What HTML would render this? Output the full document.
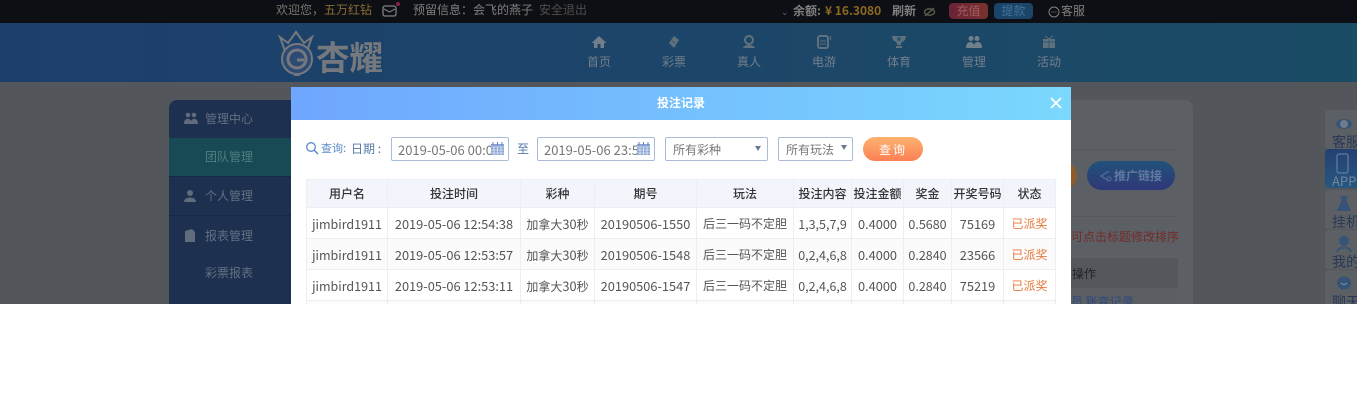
<!DOCTYPE html>
<html><head><meta charset="utf-8"><style>
html,body{margin:0;padding:0;background:#fff}
#p{position:relative;width:1357px;height:407px;overflow:hidden;background:#fff;font-family:"Noto Sans CJK SC","Liberation Sans",sans-serif;font-size:12px}
#v{position:absolute;left:0;top:0;width:1357px;height:304px;overflow:hidden;background:#53575c}
.a{position:absolute;white-space:nowrap;line-height:1}
.nav{position:absolute;top:35px;width:60px;text-align:center;color:#727e8a;font-size:12px}
.nav svg{display:block;margin:0 auto 6px}
.nav span{display:block;line-height:14px}
.side{position:absolute;color:#636f81;font-size:12px}
.rt{position:absolute;left:1325px;width:40px;height:39px;background:#5c6065;border-radius:4px 0 0 4px;overflow:hidden;color:#2a3855;font-size:14px}
.rt span{position:absolute;left:7px;top:25px;line-height:14px;white-space:nowrap}
table{position:absolute;left:306px;top:179px;border-collapse:collapse;table-layout:fixed;width:750px;font-size:12px;color:#555}
td,th{border:1px solid #eceef2;text-align:center;padding:0;white-space:nowrap;overflow:hidden}
th{height:27px;background:#f2f5fc;color:#333;font-weight:500}
td{height:30px;background:#fff}
tr.z td{background:#fbfbfb}
td b{font-weight:400;font-size:12.8px}
td b.u{font-size:12.500px}
.s{color:#e8793a}
.inp{position:absolute;top:137px;height:24px;box-sizing:border-box;border:1px solid #a9bcd6;border-radius:2px;background:#fff;color:#777;font-size:13px;line-height:23px;overflow:hidden;white-space:nowrap}
</style></head><body><div id="p"><div id="v">

<div class="a" style="left:0;top:0;width:1357px;height:23px;background:#0e0f14"></div>
<div class="a" style="left:0;top:23px;width:1357px;height:59px;background:linear-gradient(90deg,#1d3f6c,#1b4c66)"></div>

<div class="a" style="left:276px;top:4px;color:#767670">欢迎您，<span style="color:#8b6d35">五万红钻</span></div>
<svg class="a" style="left:382px;top:1px" width="20" height="18"><rect x="1" y="5" width="13" height="10" rx="2" fill="none" stroke="#808080" stroke-width="1.300"/><path d="M2 8l5.500 3L13 8" fill="none" stroke="#808080"/><circle cx="16" cy="3" r="2" fill="#8a2040"/></svg>
<div class="a" style="left:413px;top:4px;color:#7f7f7f">预留信息：会飞的燕子</div>
<div class="a" style="left:539px;top:4px;color:#4e4e4e">安全退出</div>

<div class="a" style="left:781px;top:7px;color:#666;font-size:9px">⌄</div>
<div class="a" style="left:793px;top:5px;color:#7f7f7f;font-weight:bold">余额:</div>
<div class="a" style="left:825px;top:5px;color:#8d6a22;font-weight:bold">¥ 16.3080</div>
<div class="a" style="left:892px;top:5px;color:#7f7f7f;font-weight:bold">刷新</div>
<svg class="a" style="left:923px;top:6px" width="13" height="12"><ellipse cx="6.500" cy="6" rx="5" ry="3.200" fill="none" stroke="#59634f" stroke-width="1.300"/><path d="M2 10l9-8" stroke="#59634f" stroke-width="1.300"/></svg>
<div class="a" style="left:949px;top:3px;width:39px;height:16px;border-radius:4px;background:linear-gradient(90deg,#6a2336,#78322d);color:#a05a62;text-align:center;line-height:16px">充值</div>
<div class="a" style="left:994px;top:3px;width:39px;height:16px;border-radius:4px;background:#1a4468;color:#44729a;text-align:center;line-height:16px">提款</div>
<svg class="a" style="left:1048px;top:6px" width="12" height="12"><circle cx="6" cy="6" r="5" fill="none" stroke="#808080"/><path d="M3.500 6h1M5.500 6h1M7.500 6h1" stroke="#808080"/></svg>
<div class="a" style="left:1061px;top:5px;color:#808080">客服</div>

<svg class="a" style="left:277px;top:28px" width="42" height="50">
<path d="M3 9l8 6 8-11 8 11 8-6-5 14H8z" fill="none" stroke="#75797e" stroke-width="2"/>
<circle cx="20" cy="31" r="15" fill="#2c4a74" stroke="#75797e" stroke-width="2"/>
<circle cx="20" cy="31" r="9" fill="none" stroke="#75797e" stroke-width="3"/>
<path d="M20 32h7" stroke="#75797e" stroke-width="3"/>
<path d="M20 46l-4 2h8z" fill="#75797e"/>
</svg>
<div class="a" style="left:316px;top:39px;color:#75797e;font-size:33.500px;font-weight:bold;letter-spacing:0;line-height:34px">杏耀</div>

<div class="nav" style="left:569px"><svg width="16" height="14"><path d="M8 1L0.500 8H3v5h3.500V9h3v4H13V8h2.500z" fill="#727e8a"/></svg><span>首页</span></div>
<div class="nav" style="left:644px"><svg width="16" height="14"><path d="M8 1l5 4-5 8-5-5z" fill="#62707b"/><path d="M6 6l3 2" stroke="#285a7a"/></svg><span>彩票</span></div>
<div class="nav" style="left:719px"><svg width="16" height="14"><circle cx="8" cy="5" r="4" fill="none" stroke="#62707b" stroke-width="2"/><path d="M2 13c1-4 11-4 12 0z" fill="#62707b"/></svg><span>真人</span></div>
<div class="nav" style="left:794px"><svg width="16" height="14"><rect x="2" y="1" width="10" height="12" rx="2" fill="none" stroke="#62707b" stroke-width="2"/><path d="M4 6h6M4 9h6" stroke="#62707b"/><path d="M14.500 1v4" stroke="#62707b"/></svg><span>电游</span></div>
<div class="nav" style="left:869px"><svg width="16" height="14"><path d="M1 1h14l-1 4-4 3v2H6V8L2 5z" fill="#62707b"/><circle cx="8" cy="4" r="2" fill="#285a7a"/><path d="M5 12h6" stroke="#62707b" stroke-width="2"/></svg><span>体育</span></div>
<div class="nav" style="left:944px"><svg width="16" height="14"><circle cx="5" cy="3.500" r="2.500" fill="#727e8a"/><circle cx="11" cy="3.500" r="2.500" fill="#727e8a"/><path d="M0 13c0-8 7-7 8-3 1-4 8-5 8 3z" fill="#727e8a"/></svg><span>管理</span></div>
<div class="nav" style="left:1019px"><svg width="16" height="14"><rect x="2" y="4" width="12" height="9" fill="#62707b"/><path d="M8 4v9M2 7h12" stroke="#285a7a"/><path d="M4 1l4 3 4-3" stroke="#62707b" fill="none"/></svg><span>活动</span></div>

<div class="a" style="left:169px;top:100px;width:140px;height:204px;background:#1d3050;border-radius:8px 8px 0 0"></div>
<div class="a" style="left:169px;top:138px;width:140px;height:38px;background:#184a56"></div>
<div class="a" style="left:169px;top:176px;width:140px;height:1px;background:#172843"></div>
<div class="a" style="left:169px;top:215px;width:140px;height:1px;background:#172843"></div>
<svg class="a" style="left:184px;top:112px" width="14" height="13"><circle cx="4" cy="3" r="2.300" fill="#606b7b"/><circle cx="10" cy="3" r="2.300" fill="#606b7b"/><path d="M0 12c0-7 6-6 7-3 1-3 7-4 7 3z" fill="#606b7b"/></svg>
<div class="a side" style="left:205px;top:113px">管理中心</div>
<div class="a side" style="left:205px;top:151px;color:#527c7f">团队管理</div>
<svg class="a" style="left:184px;top:190px" width="12" height="12"><circle cx="6" cy="3" r="3" fill="#606b7b"/><path d="M0 12c0-6 12-6 12 0z" fill="#606b7b"/></svg>
<div class="a side" style="left:205px;top:190px">个人管理</div>
<svg class="a" style="left:185px;top:229px" width="11" height="13"><path d="M0 2l7-2 3 3v10H0z" fill="#606b7b"/></svg>
<div class="a side" style="left:205px;top:230px">报表管理</div>
<div class="a side" style="left:205px;top:267px">彩票报表</div>

<div class="a" style="left:1060px;top:100px;width:133px;height:204px;background:#5c6064;border-radius:0 8px 0 0"></div>
<div class="a" style="left:1060px;top:149px;width:117px;height:1px;background:#54585c"></div>
<div class="a" style="left:1060px;top:216px;width:117px;height:1px;background:#54585c"></div>
<div class="a" style="left:1060px;top:161px;width:17px;height:29px;border-radius:0 15px 15px 0;background:#8e5c2c"></div>
<div class="a" style="left:1087px;top:161px;width:88px;height:29px;border-radius:15px;background:linear-gradient(#21527a,#2f3878)"></div>
<svg class="a" style="left:1098px;top:169px" width="14" height="14"><path d="M11 2L3 7l8 5" fill="none" stroke="#56709f" stroke-width="1.200"/><circle cx="11" cy="10" r="2" fill="#344278" stroke="#56709f"/></svg>
<div class="a" style="left:1114px;top:170px;color:#62799f;font-weight:bold">推广链接</div>
<div class="a" style="left:1071px;top:231px;color:#742a2a">可点击标题修改排序</div>
<div class="a" style="left:1060px;top:258px;width:118px;height:30px;background:#54585c"></div>
<div class="a" style="left:1060px;top:288px;width:118px;height:16px;background:#5b5f63"></div>
<div class="a" style="left:1072px;top:268px;color:#1f2226">操作</div>
<div class="a" style="left:1071px;top:296px;color:#2c4680">员 账变记录</div>

<div class="rt" style="top:110px"><svg style="position:absolute;left:10px;top:6px" width="18" height="16"><ellipse cx="9" cy="8" rx="8" ry="5" fill="#365476"/><circle cx="9" cy="8" r="4" fill="#6e7b8c"/></svg><span>客服</span></div>
<div class="rt" style="top:149px;background:linear-gradient(#253f72,#265880);color:#72879f"><svg style="position:absolute;left:11px;top:4px" width="13" height="21"><rect x="1" y="1" width="11" height="19" rx="2" fill="none" stroke="#607b9c" stroke-width="1.300"/></svg><span style="font-size:13px">APP</span></div>
<div class="rt" style="top:190px"><svg style="position:absolute;left:11px;top:5px" width="16" height="18"><path d="M4 1h8l-2 4 5 11H1L6 5z" fill="#365276"/></svg><span>挂机</span></div>
<div class="rt" style="top:230px"><svg style="position:absolute;left:11px;top:5px" width="16" height="18"><circle cx="8" cy="6" r="5" fill="#365476"/><path d="M1 17c1-6 13-6 14 0" fill="none" stroke="#365476" stroke-width="2"/></svg><span>我的</span></div>
<div class="rt" style="top:270px"><svg style="position:absolute;left:11px;top:5px" width="16" height="18"><ellipse cx="8" cy="8" rx="7" ry="6.500" fill="#365476"/><path d="M5 8c2 2 4 2 6 0" stroke="#8a94a0" fill="none"/></svg><span>聊天</span></div>

<div class="a" style="left:291px;top:87px;width:780px;height:217px;background:#fff"></div>
<div class="a" style="left:291px;top:87px;width:780px;height:33px;background:linear-gradient(90deg,#6fa6ff,#7ad8fd)"></div>
<div class="a" style="left:657px;top:97px;color:#fff;font-weight:bold">投注记录</div>
<svg class="a" style="left:1049px;top:96px" width="14" height="14"><path d="M2 2l10 10M12 2L2 12" stroke="#fff" stroke-width="1.800"/></svg>

<svg class="a" style="left:305px;top:141px" width="14" height="14"><circle cx="6" cy="6" r="4.300" fill="none" stroke="#5b8ac8" stroke-width="1.300"/><path d="M9 9l4 4" stroke="#5b8ac8" stroke-width="1.500"/></svg>
<div class="a" style="left:321px;top:143px;color:#5b8ac8;font-size:11px">查询:</div>
<div class="a" style="left:351px;top:143px;color:#557ba8">日期 :</div>
<div class="inp" style="left:391px;width:118px;padding-left:6px">2019-05-06 00:0</div>
<svg class="a" style="left:491px;top:142px" width="13" height="13"><rect y="2" width="13" height="11" fill="#8aa5d6"/><path d="M2 0v3M6.500 0v3M11 0v3" stroke="#5f7fc0"/><path d="M0 5h13M3 5v8M6.500 5v8M10 5v8M0 8h13M0 11h13" stroke="#fff" stroke-width=".6"/></svg>
<div class="a" style="left:517px;top:143px;color:#557ba8">至</div>
<div class="inp" style="left:537px;width:118px;padding-left:6px">2019-05-06 23:5</div>
<svg class="a" style="left:637px;top:142px" width="13" height="13"><rect y="2" width="13" height="11" fill="#8aa5d6"/><path d="M2 0v3M6.500 0v3M11 0v3" stroke="#5f7fc0"/><path d="M0 5h13M3 5v8M6.500 5v8M10 5v8M0 8h13M0 11h13" stroke="#fff" stroke-width=".6"/></svg>
<div class="inp" style="left:665px;width:103px;padding-left:7px;font-size:12px">所有彩种</div>
<svg class="a" style="left:755px;top:146px" width="6" height="5"><path d="M0 0h6L3 5z" fill="#6a7a90"/></svg>
<div class="inp" style="left:778px;width:75px;padding-left:7px;font-size:12px">所有玩法</div>
<svg class="a" style="left:841px;top:145px" width="6" height="5"><path d="M0 0h6L3 5z" fill="#6a7a90"/></svg>
<div class="a" style="left:863px;top:137px;width:60px;height:24px;border-radius:12px;background:linear-gradient(#fdb36f,#fb7f55);color:#fff;text-align:center;line-height:25px;letter-spacing:2px">查询</div>

<table><colgroup><col style="width:81px"><col style="width:133px"><col style="width:74px"><col style="width:102px"><col style="width:97px"><col style="width:58px"><col style="width:52px"><col style="width:48px"><col style="width:52px"><col style="width:52px"></colgroup>
<tr><th>用户名</th><th>投注时间</th><th>彩种</th><th>期号</th><th>玩法</th><th>投注内容</th><th>投注金额</th><th>奖金</th><th>开奖号码</th><th>状态</th></tr>
<tr><td><b class="u">jimbird1911</b></td><td><b>2019-05-06 12:54:38</b></td><td>加拿大<b>30</b>秒</td><td><b>20190506-1550</b></td><td>后三一码不定胆</td><td><b class="u">1,3,5,7,9</b></td><td><b>0.4000</b></td><td><b class="u">0.5680</b></td><td><b>75169</b></td><td class="s">已派奖</td></tr>
<tr class="z"><td><b class="u">jimbird1911</b></td><td><b>2019-05-06 12:53:57</b></td><td>加拿大<b>30</b>秒</td><td><b>20190506-1548</b></td><td>后三一码不定胆</td><td><b class="u">0,2,4,6,8</b></td><td><b>0.4000</b></td><td><b class="u">0.2840</b></td><td><b>23566</b></td><td class="s">已派奖</td></tr>
<tr><td><b class="u">jimbird1911</b></td><td><b>2019-05-06 12:53:11</b></td><td>加拿大<b>30</b>秒</td><td><b>20190506-1547</b></td><td>后三一码不定胆</td><td><b class="u">0,2,4,6,8</b></td><td><b>0.4000</b></td><td><b class="u">0.2840</b></td><td><b>75219</b></td><td class="s">已派奖</td></tr>
<tr class="z"><td></td><td></td><td></td><td></td><td></td><td></td><td></td><td></td><td></td><td></td></tr>
</table>
</div></div></body></html>
